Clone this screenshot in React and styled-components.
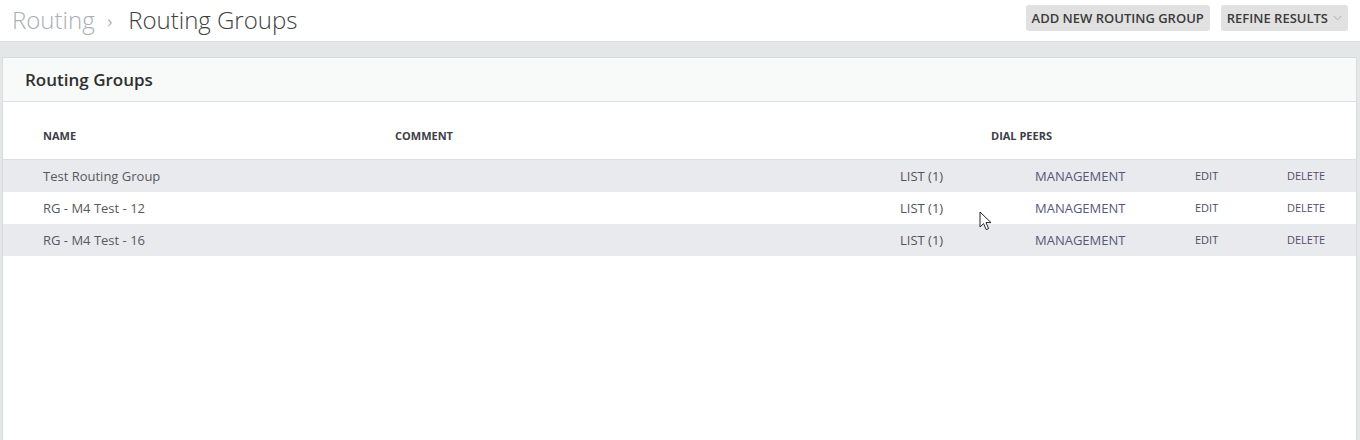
import React from "react";
import styled, { createGlobalStyle } from "styled-components";

const GlobalStyle = createGlobalStyle`
  html, body {
    margin: 0;
    padding: 0;
    height: 100%;
    background: #e4e7e8;
    font-family: "Open Sans", "Liberation Sans", sans-serif;
    overflow: hidden;
  }
  #root {
    height: 100%;
  }
`;

const Page = styled.div`
  display: flex;
  flex-direction: column;
  height: 100%;
  position: relative;
`;

const TopBar = styled.header`
  height: 42px;
  box-sizing: border-box;
  background: #fff;
  border-bottom: 1px solid #d9dddf;
  display: flex;
  align-items: center;
  justify-content: space-between;
  padding: 0 12px 0 12px;
`;

const Crumbs = styled.div`
  display: flex;
  align-items: center;
  font-size: 24px;
  font-weight: 300;
  margin-top: -2px;
`;

const Crumb = styled.span`
  color: ${(p) => (p.$current ? "#3f3f3f" : "#a9afb3")};
`;

const Sep = styled.span`
  color: #8a9095;
  font-size: 18px;
  margin: 0 16px 0 13px;
  position: relative;
  top: 1px;
`;

const Actions = styled.div`
  display: flex;
  gap: 11px;
  margin-top: -6px;
`;

const ActionButton = styled.button`
  height: 26px;
  border: none;
  border-radius: 3px;
  background: #e1e1e1;
  color: #3b3b3b;
  font-family: inherit;
  font-size: 13px;
  font-weight: 600;
  padding: 0 6px;
  display: flex;
  align-items: center;
  gap: 5px;
  cursor: pointer;
`;

const Main = styled.main`
  flex: 1;
  padding: 15px 3px 0 2px;
  display: flex;
`;

const Panel = styled.section`
  flex: 1;
  background: #fff;
  border: 1px solid #d9dcde;
  border-bottom: none;
  display: flex;
  flex-direction: column;
`;

const PanelHead = styled.div`
  height: 44px;
  box-sizing: border-box;
  background: #f8f9f9;
  border-bottom: 1px solid #dcdfe1;
  display: flex;
  align-items: center;
  padding-left: 22px;
  font-size: 17px;
  font-weight: 600;
  color: #2f2f2f;
`;

const Row = styled.div`
  display: grid;
  grid-template-columns: 352px 505px 135px 160px 92px 1fr;
  padding-left: 40px;
  align-items: center;
  height: ${(p) => (p.$head ? "58px" : "32px")};
  background: ${(p) => (p.$striped ? "#e9eaed" : "#fff")};
  border-bottom: ${(p) => (p.$head ? "1px solid #dcdfe3" : "none")};
  padding-top: ${(p) => (p.$head ? "10px" : "0")};
  box-sizing: border-box;
`;

const HeadCell = styled.div`
  font-size: 11px;
  font-weight: 700;
  color: #3c4046;
  grid-column: ${(p) => p.$span || "auto"};
  padding-left: ${(p) => p.$indent || 0}px;
`;

const Cell = styled.div`
  font-size: ${(p) => (p.$small ? "11px" : "13px")};
  color: ${(p) => p.$color || "#555a60"};
  white-space: nowrap;
  margin-top: ${(p) => (p.$small ? "-2px" : "0")};
`;

const Pointer = styled.svg`
  position: absolute;
  left: 979px;
  top: 211px;
`;

const groups = [
  { name: "Test Routing Group", comment: "", peers: 1 },
  { name: "RG - M4 Test - 12", comment: "", peers: 1 },
  { name: "RG - M4 Test - 16", comment: "", peers: 1 },
];

export default function App() {
  return (
    <Page>
      <GlobalStyle />
      <TopBar>
        <Crumbs>
          <Crumb>Routing</Crumb>
          <Sep>›</Sep>
          <Crumb $current>Routing Groups</Crumb>
        </Crumbs>
        <Actions>
          <ActionButton>ADD NEW ROUTING GROUP</ActionButton>
          <ActionButton>
            REFINE RESULTS
            <svg width="9" height="6" viewBox="0 0 9 6">
              <path d="M0.5 0.8 L4.5 4.8 L8.5 0.8" fill="none" stroke="#a8adb2" strokeWidth="1" />
            </svg>
          </ActionButton>
        </Actions>
      </TopBar>
      <Main>
        <Panel>
          <PanelHead>Routing Groups</PanelHead>
          <Row $head>
            <HeadCell>NAME</HeadCell>
            <HeadCell>COMMENT</HeadCell>
            <HeadCell $span="3 / 5" $indent={91}>DIAL PEERS</HeadCell>
          </Row>
          {groups.map((g, i) => (
            <Row key={g.name} $striped={i % 2 === 0}>
              <Cell>{g.name}</Cell>
              <Cell>{g.comment}</Cell>
              <Cell $color="#4f545a">LIST ({g.peers})</Cell>
              <Cell $color="#56587a">MANAGEMENT</Cell>
              <Cell $small $color="#475260">EDIT</Cell>
              <Cell $small $color="#5a4b6c">DELETE</Cell>
            </Row>
          ))}
        </Panel>
      </Main>
      <Pointer width="14" height="22" viewBox="0 0 14 22">
        <path
          d="M1 1 L1 16 L4.6 12.6 L7.2 18.6 L9.6 17.6 L7 11.6 L12 11.6 Z"
          fill="#fff"
          stroke="#222"
          strokeWidth="1"
          strokeLinejoin="round"
        />
      </Pointer>
    </Page>
  );
}
